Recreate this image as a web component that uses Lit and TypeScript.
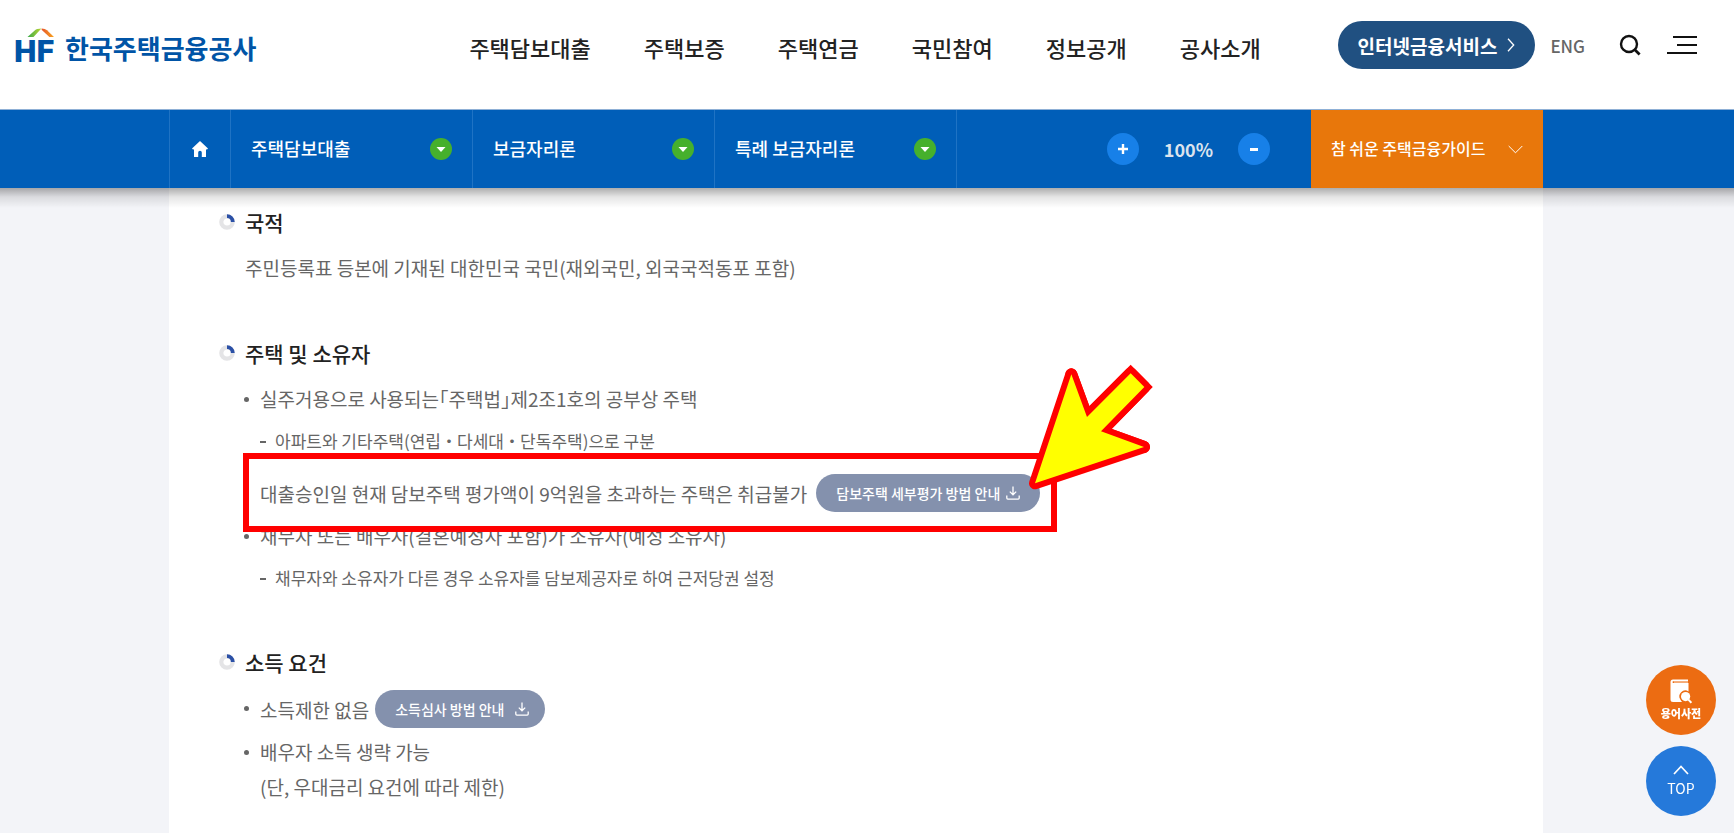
import { LitElement, html, svg, css } from "lit";
import { customElement } from "lit/decorators.js";

const downloadIcon = html`<svg class="download" viewBox="0 0 14 14" aria-hidden="true">
  <path d="M7 .5v8M3.8 5.6 7 8.8l3.2-3.2M.8 9.5v2.6q0 1 1 1h10.4q1 0 1-1V9.5" fill="none" stroke="#fff" stroke-width="1.3" />
</svg>`;

const ringIcon = html`<svg class="ring" viewBox="0 0 16 16" aria-hidden="true">
  <circle cx="8" cy="8" r="5.7" fill="none" stroke="#e4e4e6" stroke-width="4.2" />
  <path d="M8 2.2A5.8 5.8 0 0 1 13.8 8" fill="none" stroke="#2b50a6" stroke-width="3.8" />
</svg>`;

@customElement("site-header")
export class SiteHeader extends LitElement {
  static styles = css`
    :host {
      display: block;
      background: #fff;
    }
    .row {
      display: flex;
      align-items: center;
      padding: 21px 37px 40px 14px;
    }
    a {
      color: inherit;
      text-decoration: none;
    }
    .logo {
      display: flex;
      align-items: center;
      gap: 9px;
      color: #0054a6;
      font-size: 26px;
      font-weight: 700;
      line-height: 40px;
      white-space: nowrap;
    }
    .logo span {
      padding-top: 6px;
    }
    .mark {
      display: block;
      width: 42px;
      height: 48px;
    }
    .mark text {
      font: 900 32px Roboto, sans-serif;
      fill: #0054a6;
    }
    nav {
      display: flex;
      gap: 53px;
      margin-left: 213px;
      padding-top: 4px;
      color: #222;
      font-size: 22px;
      font-weight: 500;
      line-height: 32px;
      white-space: nowrap;
    }
    .tools {
      display: flex;
      align-items: center;
      margin-left: auto;
    }
    .service {
      display: flex;
      align-items: center;
      gap: 10px;
      height: 48px;
      padding: 0 20px;
      border-radius: 24px;
      background: #205081;
      color: #fff;
      font-size: 19px;
      font-weight: 700;
      white-space: nowrap;
    }
    .chevron {
      width: 8px;
      height: 14px;
    }
    .lang {
      margin-left: 15px;
      color: #666;
      font-size: 17px;
      font-weight: 500;
    }
    button {
      display: flex;
      padding: 0;
      border: 0;
      background: none;
    }
    .search {
      margin-left: 34px;
    }
    .search svg {
      width: 22px;
      height: 22px;
    }
    .menu {
      margin-left: 26px;
    }
    .menu svg {
      width: 30px;
      height: 20px;
    }
  `;

  render() {
    const items = ["주택담보대출", "주택보증", "주택연금", "국민참여", "정보공개", "공사소개"];
    return html`<header class="row">
      <a class="logo" href="#">
        <svg class="mark" viewBox="0 0 42 48" aria-hidden="true">
          <defs>
            <linearGradient id="left"><stop offset="0" stop-color="#39a84a" /><stop offset="1" stop-color="#bcd531" /></linearGradient>
            <linearGradient id="right"><stop offset="0" stop-color="#e5532b" /><stop offset="1" stop-color="#f9a61f" /></linearGradient>
          </defs>
          <text x="0" y="41">HF</text>
          <path d="M13.5 16 21 9.2Q22.6 7.6 27.4 7.6L19.5 16Z" fill="url(#left)" />
          <path d="M27.6 7.6Q31.2 7.6 33 9.2L40 16H35.4L27.6 8.8Z" fill="url(#right)" />
        </svg>
        <span>한국주택금융공사</span>
      </a>
      <nav aria-label="주 메뉴">${items.map((t) => html`<a href="#">${t}</a>`)}</nav>
      <div class="tools">
        <a class="service" href="#">인터넷금융서비스
          <svg class="chevron" viewBox="0 0 8 14" aria-hidden="true"><path d="M1 .7 6.7 7 1 13.3" fill="none" stroke="#fff" stroke-width="1.3" /></svg>
        </a>
        <a class="lang" href="#">ENG</a>
        <button class="search" aria-label="검색">
          <svg viewBox="0 0 22 22"><circle cx="10" cy="10" r="8" fill="none" stroke="#111" stroke-width="2.4" /><path d="m15.6 15.6 5 5" stroke="#111" stroke-width="2.8" /></svg>
        </button>
        <button class="menu" aria-label="전체메뉴">
          <svg viewBox="0 0 30 20"><path d="M6 2h24M10 10h20M0 18h30" stroke="#111" stroke-width="2" /></svg>
        </button>
      </div>
    </header>`;
  }
}

@customElement("location-bar")
export class LocationBar extends LitElement {
  static styles = css`
    :host {
      display: block;
      padding: 0 191px 0 169px;
      border-top: 1px solid #8fb0d6;
      background: #005eb8;
      color: #fff;
    }
    .row {
      display: flex;
      height: 78px;
    }
    button {
      font: inherit;
      color: inherit;
      border: 0;
      padding: 0;
      background: none;
    }
    .home {
      box-sizing: border-box;
      display: flex;
      align-items: center;
      justify-content: center;
      width: 62px;
      border: solid #1f73c4;
      border-width: 0 1px;
    }
    .home svg {
      width: 16px;
      height: 16px;
    }
    .crumb {
      box-sizing: border-box;
      display: flex;
      align-items: center;
      justify-content: space-between;
      width: 242px;
      padding: 0 20px;
      border-right: 1px solid #1f73c4;
      font-size: 18px;
      font-weight: 500;
      white-space: nowrap;
    }
    .crumb span,
    .guide span {
      padding-bottom: 2px;
    }
    .crumb svg {
      width: 22px;
      height: 22px;
    }
    .zoom {
      display: flex;
      align-items: center;
      gap: 25px;
      margin-left: auto;
      padding-right: 41px;
      color: #dbe3ee;
      font-size: 18px;
      font-weight: 700;
    }
    .round {
      display: flex;
      width: 32px;
      height: 32px;
      border-radius: 50%;
      background: #1780e8;
    }
    .guide {
      display: flex;
      align-items: center;
      justify-content: space-between;
      width: 232px;
      padding: 0 20px;
      background: #e8770b;
      font-size: 16px;
      font-weight: 500;
      white-space: nowrap;
    }
    .guide svg {
      width: 15px;
      height: 9px;
    }
  `;

  render() {
    return html`<div class="row">
      <button class="home" aria-label="홈">
        <svg viewBox="0 0 16 16"><path d="M8 0 16 7.6 14.8 8.8 14 8.1V16H9.8V11.5Q9.8 9.8 8 9.8T6.2 11.5V16H2V8.1L1.2 8.8 0 7.6Z" fill="#fff" /></svg>
      </button>
      ${["주택담보대출", "보금자리론", "특례 보금자리론"].map(
        (t) => html`<button class="crumb"><span>${t}</span>
          <svg viewBox="0 0 22 22" aria-hidden="true"><circle cx="11" cy="11" r="11" fill="#46b02c" /><path d="M6.5 9h9L11 14Z" fill="#fff" /></svg>
        </button>`
      )}
      <div class="zoom">
        <button class="round" aria-label="확대">
          <svg viewBox="0 0 32 32"><path d="M11 16h10M16 11v10" stroke="#fff" stroke-width="2.4" /></svg>
        </button>
        <span>100%</span>
        <button class="round" aria-label="축소">
          <svg viewBox="0 0 32 32"><path d="M12 16.5h8" stroke="#fff" stroke-width="3" /></svg>
        </button>
      </div>
      <button class="guide"><span>참 쉬운 주택금융가이드</span>
        <svg viewBox="0 0 15 9" aria-hidden="true"><path d="m.7 1 6.8 6.8L14.3 1" fill="none" stroke="#fff" stroke-width="1" /></svg>
      </button>
    </div>`;
  }
}

@customElement("app-root")
export class AppRoot extends LitElement {
  static styles = css`
    :host {
      display: flex;
      flex-direction: column;
      min-height: 100vh;
      background: #f3f4f8;
      color: #666;
      font-family: "Noto Sans CJK KR", "Noto Sans", sans-serif;
    }
    .top {
      position: relative;
    }
    .top::after {
      content: "";
      position: absolute;
      top: 100%;
      left: 0;
      right: 0;
      height: 20px;
      background: linear-gradient(rgba(0, 0, 0, 0.32), rgba(0, 0, 0, 0.1) 45%, transparent);
    }
    main {
      flex: 1;
      margin: 0 191px 0 169px;
      padding: 16px 50px 0;
      background: #fff;
      font-size: 19px;
      line-height: 35px;
      font-feature-settings: "halt";
    }
    section {
      padding-left: 26px;
      margin-bottom: 50px;
    }
    section:last-child {
      margin-bottom: 0;
    }
    h2 {
      display: flex;
      align-items: center;
      gap: 10px;
      margin: 0 0 10px -26px;
      color: #222;
      font-size: 21px;
      font-weight: 500;
      line-height: 36px;
    }
    .ring {
      width: 16px;
      height: 16px;
    }
    p {
      margin: 0;
    }
    ul {
      display: flex;
      flex-direction: column;
      gap: 6px;
      margin: 0;
      padding: 0 0 0 15px;
      list-style: none;
    }
    .dot {
      position: relative;
    }
    .dot::before {
      content: "";
      position: absolute;
      left: -16px;
      top: 16px;
      width: 5px;
      height: 5px;
      border-radius: 50%;
      background: #666;
    }
    .sub {
      padding: 9px 0 0 15px;
      font-size: 17px;
      line-height: 32px;
    }
    .dash {
      position: relative;
    }
    .dash::before {
      content: "";
      position: absolute;
      left: -15px;
      top: 16px;
      width: 6px;
      height: 2px;
      background: #666;
    }
    .with-button {
      display: flex;
      align-items: center;
      gap: 6px;
      width: fit-content;
    }
    .marked {
      position: relative;
      z-index: 1;
      gap: 9px;
      margin-top: 11px;
    }
    .marked::before {
      content: "";
      position: absolute;
      inset: -21px -17px -20px;
      border: 6px solid #f00;
      background: #fff;
    }
    .marked > * {
      z-index: 1;
    }
    .arrow {
      position: absolute;
      left: calc(100% - 15px);
      top: -112px;
      width: 130px;
      height: 130px;
    }
    .arrow polyline,
    .arrow polygon {
      stroke: #f00;
      stroke-width: 36px;
    }
    .arrow polyline {
      fill: none;
      stroke-linejoin: miter;
      stroke-linecap: round;
    }
    .arrow polygon {
      fill: #ff0;
      stroke-linejoin: round;
      paint-order: stroke;
    }
    .pill {
      display: flex;
      align-items: center;
      gap: 6px;
      height: 38px;
      padding: 0 20px;
      border: 0;
      border-radius: 19px;
      background: #8491ad;
      color: #fff;
      font-family: inherit;
      font-size: 14px;
      font-weight: 500;
      white-space: nowrap;
    }
    .wide {
      gap: 11px;
      padding-right: 16px;
    }
    .download {
      width: 14px;
      height: 14px;
    }
    .quick {
      position: fixed;
      right: 18px;
      bottom: 17px;
      display: grid;
      gap: 11px;
    }
    .quick a {
      display: flex;
      flex-direction: column;
      align-items: center;
      justify-content: center;
      width: 70px;
      height: 70px;
      border-radius: 50%;
      color: #fff;
      text-decoration: none;
    }
    .terms {
      background: #ec6c12;
      font-size: 11px;
      font-weight: 900;
      line-height: 18px;
    }
    .terms svg {
      width: 22px;
      height: 25px;
    }
    .to-top {
      gap: 4px;
      background: #2579da;
      font-size: 14px;
      line-height: 18px;
    }
    .to-top svg {
      width: 16px;
      height: 10px;
    }
  `;

  render() {
    const edge = "1119,77 1166,205 1297,74 1338,115 1208,248 1337,295";
    return html`
      <div class="top">
        <site-header></site-header>
        <location-bar></location-bar>
      </div>
      <main>
        <section>
          <h2>${ringIcon}국적</h2>
          <p>주민등록표 등본에 기재된 대한민국 국민(재외국민, 외국국적동포 포함)</p>
        </section>
        <section>
          <h2>${ringIcon}주택 및 소유자</h2>
          <ul>
            <li class="dot">실주거용으로 사용되는「주택법」제2조1호의 공부상 주택
              <ul class="sub"><li class="dash">아파트와 기타주택(연립 ・ 다세대 ・ 단독주택)으로 구분</li></ul>
            </li>
            <li class="with-button marked">
              <span>대출승인일 현재 담보주택 평가액이 9억원을 초과하는 주택은 취급불가</span>
              <button class="pill">담보주택 세부평가 방법 안내${downloadIcon}</button>
              <svg class="arrow" viewBox="980 40 390 390" aria-hidden="true">
                ${svg`<polyline points="${edge}" /><polygon points="1010,404 ${edge}" />`}
              </svg>
            </li>
            <li class="dot">채무자 또는 배우자(결혼예정자 포함)가 소유자(예정 소유자)
              <ul class="sub"><li class="dash">채무자와 소유자가 다른 경우 소유자를 담보제공자로 하여 근저당권 설정</li></ul>
            </li>
          </ul>
        </section>
        <section>
          <h2>${ringIcon}소득 요건</h2>
          <ul>
            <li class="dot with-button">
              <span>소득제한 없음</span>
              <button class="pill wide">소득심사 방법 안내${downloadIcon}</button>
            </li>
            <li class="dot">배우자 소득 생략 가능<br />(단, 우대금리 요건에 따라 제한)</li>
          </ul>
        </section>
      </main>
      <div class="quick">
        <a class="terms" href="#">
          <svg viewBox="0 0 22 25" aria-hidden="true">
            <path d="M3 .5H18V2.2H3.4a.9.9 0 0 0 0 1.8H18.5V12.5A5.8 5.8 0 0 0 10.4 20.5Q11 22.3 12.2 23H3Q.5 23 .5 20.5V3Q.5.5 3 .5Z" fill="#fff" />
            <path d="M4 3.1H18" stroke="#fff" stroke-width=".7" />
            <circle cx="15.6" cy="17.6" r="4.6" fill="#fff" />
            <path d="m18.4 20.6 3 3.2" stroke="#fff" stroke-width="2" />
          </svg>
          용어사전
        </a>
        <a class="to-top" href="#">
          <svg viewBox="0 0 16 10" aria-hidden="true"><path d="M1 9 8 1.5 15 9" fill="none" stroke="#fff" stroke-width="1.7" /></svg>
          TOP
        </a>
      </div>
    `;
  }
}
